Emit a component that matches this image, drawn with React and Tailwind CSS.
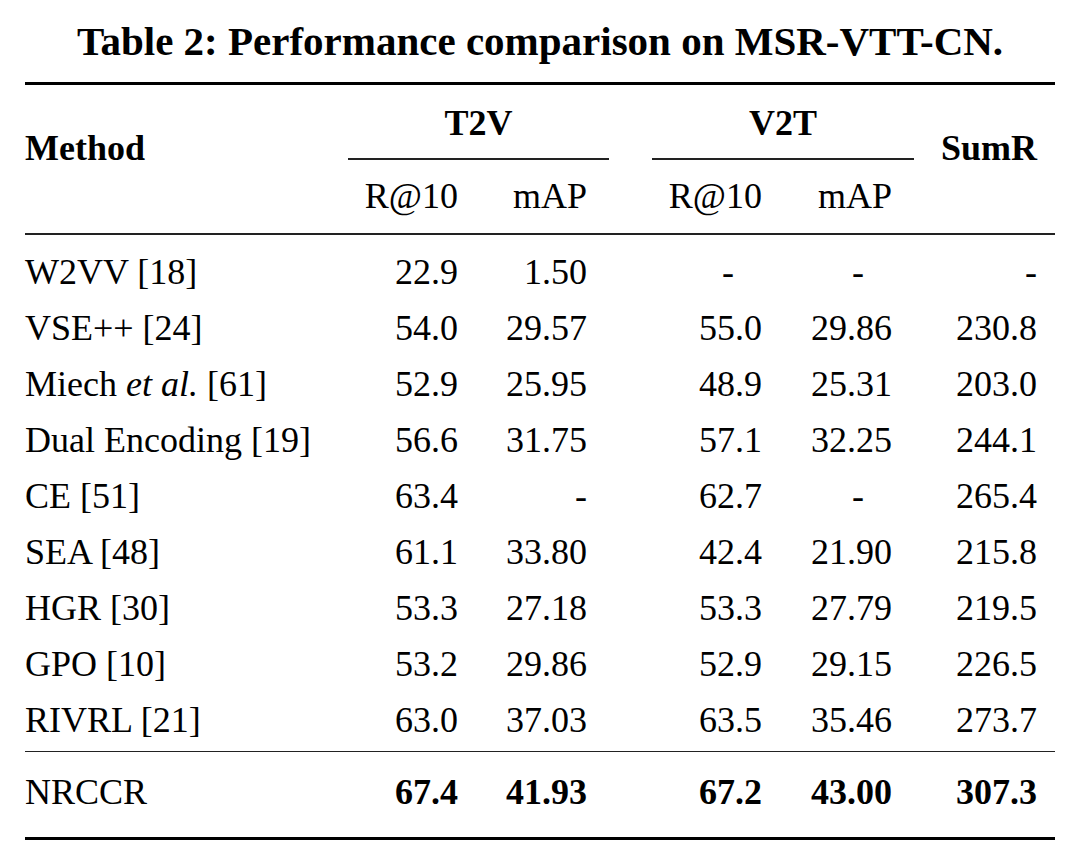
import React from 'react';

const rows = [
  { name: 'W2VV [18]', vals: ['22.9', '1.50', '-', '-', '-'] },
  { name: 'VSE++ [24]', vals: ['54.0', '29.57', '55.0', '29.86', '230.8'] },
  { name: 'Miech', italic: 'et al.', ref: '[61]', vals: ['52.9', '25.95', '48.9', '25.31', '203.0'] },
  { name: 'Dual Encoding [19]', vals: ['56.6', '31.75', '57.1', '32.25', '244.1'] },
  { name: 'CE [51]', vals: ['63.4', '-', '62.7', '-', '265.4'] },
  { name: 'SEA [48]', vals: ['61.1', '33.80', '42.4', '21.90', '215.8'] },
  { name: 'HGR [30]', vals: ['53.3', '27.18', '53.3', '27.79', '219.5'] },
  { name: 'GPO [10]', vals: ['53.2', '29.86', '52.9', '29.15', '226.5'] },
  { name: 'RIVRL [21]', vals: ['63.0', '37.03', '63.5', '35.46', '273.7'] },
];

// width classes for the numeric columns, in order
const colW = ['w-[110px]', 'w-[129px]', 'w-[175px]', 'w-[130px]', 'w-[145px]'];
const dashPad = ['pr-0', 'pr-0', 'pr-[28px]', 'pr-[28px]', 'pr-0'];

const Cell = ({ v, i, bold }) => (
  <div className={`${colW[i]} text-right ${v === '-' ? dashPad[i] : ''} ${bold ? 'font-bold' : ''}`}>
    {v}
  </div>
);

const Row = ({ r }) => (
  <div className="flex h-[56px] leading-[56px]">
    <div className="w-[323px]">
      {r.italic ? (
        <>
          {r.name} <i>{r.italic}</i> {r.ref}
        </>
      ) : (
        r.name
      )}
    </div>
    {r.vals.map((v, i) => (
      <Cell key={i} v={v} i={i} />
    ))}
  </div>
);

const App = () => {
  return (
    <div
      className="w-[1080px] h-[867px] bg-white text-black overflow-hidden"
      style={{ fontFamily: '"Liberation Serif", "DejaVu Serif", serif' }}
    >
      <h1 className="pt-[17px] text-[41px] leading-[48px] font-bold text-center">
        Table 2: Performance comparison on MSR-VTT-CN.
      </h1>

      <div className="px-[25px] text-[36px]">
        <div className="mt-[17px] h-[3px] bg-black" />

        {/* header */}
        <div className="flex h-[148px]">
          <div className="w-[323px] pt-[41px] leading-[44px] font-bold">Method</div>

          <div className="w-[261px] pt-[16px]">
            <div className="text-center leading-[44px] font-bold">T2V</div>
            <div className="mt-[13px] h-[1.5px] bg-[#222]" />
            <div className="mt-[14.5px] flex leading-[44px]">
              <div className="w-[110px] text-right">R@10</div>
              <div className="w-[129px] text-right">mAP</div>
            </div>
          </div>

          <div className="w-[43px]" />

          <div className="w-[262px] pt-[16px]">
            <div className="text-center leading-[44px] font-bold">V2T</div>
            <div className="mt-[13px] h-[1.5px] bg-[#222]" />
            <div className="mt-[14.5px] flex leading-[44px]">
              <div className="w-[110px] text-right">R@10</div>
              <div className="w-[130px] text-right">mAP</div>
            </div>
          </div>

          <div className="w-[123px] pt-[41px] leading-[44px] font-bold text-right">SumR</div>
        </div>

        <div className="h-[1.5px] bg-[#222]" />

        <div className="mt-[9px]">
          {rows.map((r, i) => (
            <Row key={i} r={r} />
          ))}
        </div>

        <div className="mt-[3px] h-[1.5px] bg-[#222]" />

        <div className="mt-[11.5px] flex h-[56px] leading-[56px]">
          <div className="w-[323px]">NRCCR</div>
          {['67.4', '41.93', '67.2', '43.00', '307.3'].map((v, i) => (
            <Cell key={i} v={v} i={i} bold />
          ))}
        </div>

        <div className="mt-[17px] h-[3px] bg-black" />
      </div>
    </div>
  );
};

export default App;
